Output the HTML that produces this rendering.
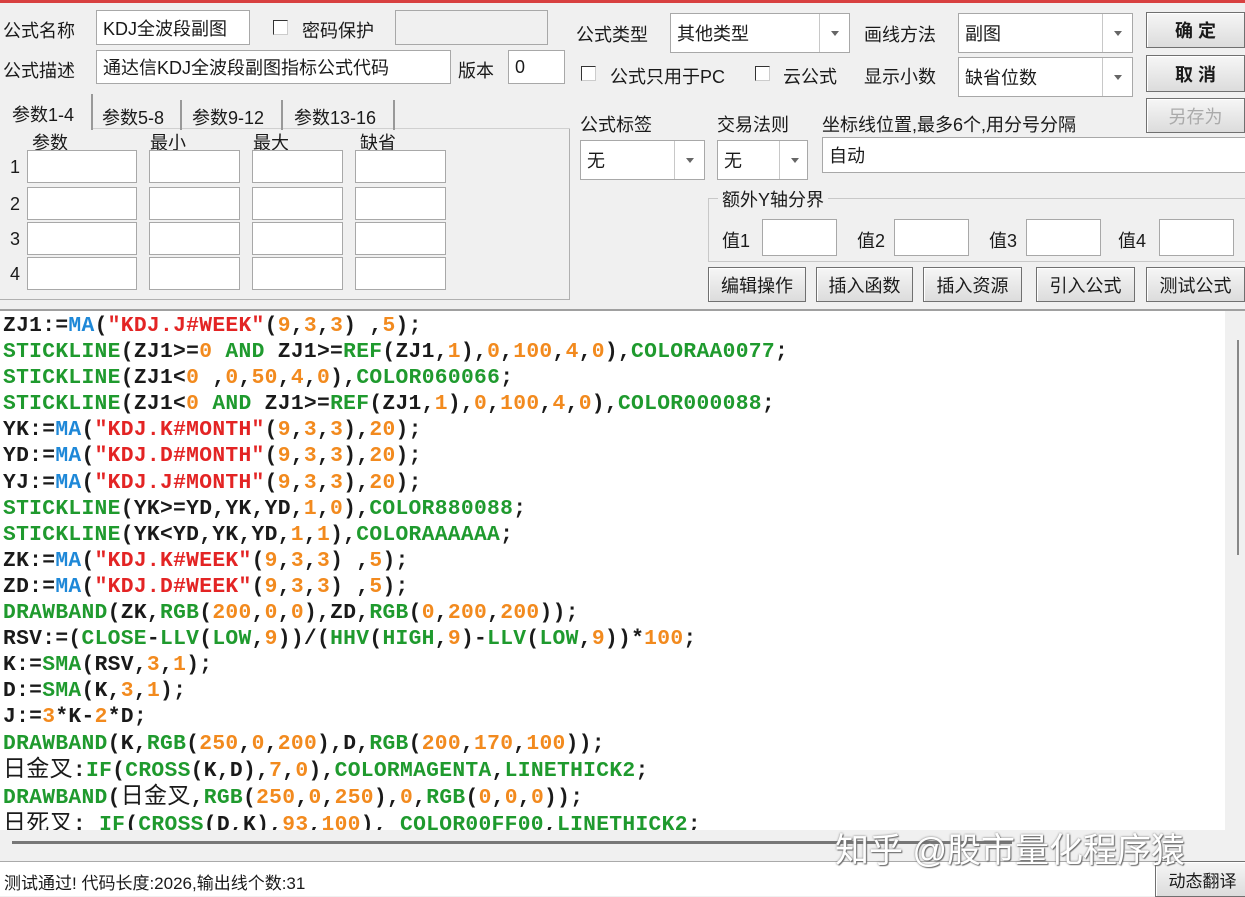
<!DOCTYPE html>
<html><head><meta charset="utf-8"><style>
*{box-sizing:border-box;margin:0;padding:0}
body{width:1245px;height:896px;overflow:hidden;background:#f0f0f0;position:relative;font-family:"Liberation Sans","Noto Sans CJK SC",sans-serif;font-size:18px;color:#1a1a1a}
.a{position:absolute;white-space:nowrap}
.in{position:absolute;background:#fff;border:1px solid #a8a8a8;padding-left:6px;display:flex;align-items:center}
.cb{position:absolute;width:15px;height:15px;border:1px solid #333;border-right-color:#ccc;border-bottom-color:#ccc;background:#fff}
.arr{position:absolute;right:0;top:0;bottom:0;width:30px;border-left:1px solid #c8c8c8}
.arr:after{content:"";position:absolute;left:11px;top:50%;margin-top:-2px;border:4px solid transparent;border-top:5px solid #666}
.btn{position:absolute;border:1px solid #707070;background:linear-gradient(#f6f6f6,#dcdcdc);display:flex;align-items:center;justify-content:center;box-shadow:inset 1px 1px 0 #fff}
#code{position:absolute;left:0;top:311px;width:1225px;height:519px;background:#fff;overflow:hidden;font-family:"Liberation Mono","Noto Sans CJK SC",monospace;font-weight:bold;font-size:21.3px;letter-spacing:0.3px;line-height:26.1px;padding:2px 0 0 3px;color:#1a1a1a}
#code div{white-space:pre}
.g{color:#1f9a2e}.b{color:#1e88d8}.r{color:#e32424}.o{color:#f28a1e}
</style></head><body>
<div class="a" style="left:0;top:0;width:1245px;height:3px;background:#d84040"></div>
<div class="a" style="left:3px;top:17px">公式名称</div>
<div class="in" style="left:96px;top:10px;width:154px;height:35px">KDJ全波段副图</div>
<div class="cb" style="left:273px;top:20px"></div>
<div class="a" style="left:302px;top:17px">密码保护</div>
<div class="in" style="left:395px;top:10px;width:153px;height:35px;background:#f0f0f0"></div>
<div class="a" style="left:3px;top:57px">公式描述</div>
<div class="in" style="left:96px;top:50px;width:355px;height:34px">通达信KDJ全波段副图指标公式代码</div>
<div class="a" style="left:458px;top:57px">版本</div>
<div class="in" style="left:508px;top:50px;width:57px;height:34px">0</div>
<div class="a" style="left:0;top:128px;width:570px;height:172px;border:1px solid #b0b0b0;border-top:none;border-left:none"></div>
<div class="a" style="left:0;top:128px;width:570px;border-top:1px solid #d0d0d0"></div>
<div class="a" style="left:0;top:94px;width:93px;height:36px;background:#f0f0f0;border-right:2px solid #999"></div>
<div class="a" style="left:12px;top:101px">参数1-4</div>
<div class="a" style="left:102px;top:104px">参数5-8</div>
<div class="a" style="left:192px;top:104px">参数9-12</div>
<div class="a" style="left:294px;top:104px">参数13-16</div>
<div class="a" style="left:180px;top:100px;width:2px;height:30px;background:#999"></div>
<div class="a" style="left:281px;top:100px;width:2px;height:30px;background:#999"></div>
<div class="a" style="left:393px;top:100px;width:2px;height:30px;background:#999"></div>
<div class="a" style="left:32px;top:129px">参数</div>
<div class="a" style="left:150px;top:129px">最小</div>
<div class="a" style="left:253px;top:129px">最大</div>
<div class="a" style="left:360px;top:129px">缺省</div>
<div class="a" style="left:10px;top:157px">1</div><div class="a" style="left:10px;top:194px">2</div><div class="a" style="left:10px;top:229px">3</div><div class="a" style="left:10px;top:264px">4</div>
<div class="in" style="left:27px;top:150px;width:110px;height:33px"></div><div class="in" style="left:149px;top:150px;width:91px;height:33px"></div><div class="in" style="left:252px;top:150px;width:91px;height:33px"></div><div class="in" style="left:355px;top:150px;width:91px;height:33px"></div>
<div class="in" style="left:27px;top:187px;width:110px;height:33px"></div><div class="in" style="left:149px;top:187px;width:91px;height:33px"></div><div class="in" style="left:252px;top:187px;width:91px;height:33px"></div><div class="in" style="left:355px;top:187px;width:91px;height:33px"></div>
<div class="in" style="left:27px;top:222px;width:110px;height:33px"></div><div class="in" style="left:149px;top:222px;width:91px;height:33px"></div><div class="in" style="left:252px;top:222px;width:91px;height:33px"></div><div class="in" style="left:355px;top:222px;width:91px;height:33px"></div>
<div class="in" style="left:27px;top:257px;width:110px;height:33px"></div><div class="in" style="left:149px;top:257px;width:91px;height:33px"></div><div class="in" style="left:252px;top:257px;width:91px;height:33px"></div><div class="in" style="left:355px;top:257px;width:91px;height:33px"></div>
<div class="a" style="left:576px;top:21px">公式类型</div>
<div class="in" style="left:670px;top:13px;width:180px;height:40px">其他类型<span class="arr"></span></div>
<div class="a" style="left:864px;top:21px">画线方法</div>
<div class="in" style="left:958px;top:13px;width:175px;height:40px">副图<span class="arr"></span></div>
<div class="btn" style="left:1146px;top:12px;width:99px;height:36px;font-weight:bold">确 定</div>
<div class="btn" style="left:1146px;top:55px;width:99px;height:37px;font-weight:bold">取 消</div>
<div class="btn" style="left:1146px;top:98px;width:99px;height:35px;color:#aaa">另存为</div>
<div class="cb" style="left:581px;top:66px"></div>
<div class="a" style="left:610px;top:63px">公式只用于PC</div>
<div class="cb" style="left:755px;top:66px"></div>
<div class="a" style="left:783px;top:63px">云公式</div>
<div class="a" style="left:864px;top:63px">显示小数</div>
<div class="in" style="left:958px;top:57px;width:175px;height:40px">缺省位数<span class="arr"></span></div>
<div class="a" style="left:580px;top:111px">公式标签</div>
<div class="a" style="left:717px;top:111px">交易法则</div>
<div class="a" style="left:822px;top:111px">坐标线位置,最多6个,用分号分隔</div>
<div class="in" style="left:580px;top:140px;width:125px;height:40px">无<span class="arr"></span></div>
<div class="in" style="left:717px;top:140px;width:91px;height:40px">无<span class="arr" style="width:28px"></span></div>
<div class="in" style="left:822px;top:137px;width:430px;height:36px">自动</div>
<div class="a" style="left:708px;top:198px;width:545px;height:64px;border:1px solid #c8c8c8"></div>
<div class="a" style="left:718px;top:186px;background:#f0f0f0;padding:0 4px">额外Y轴分界</div>
<div class="a" style="left:722px;top:227px">值1</div><div class="in" style="left:762px;top:219px;width:75px;height:37px"></div>
<div class="a" style="left:857px;top:227px">值2</div><div class="in" style="left:894px;top:219px;width:75px;height:37px"></div>
<div class="a" style="left:989px;top:227px">值3</div><div class="in" style="left:1026px;top:219px;width:75px;height:37px"></div>
<div class="a" style="left:1118px;top:227px">值4</div><div class="in" style="left:1159px;top:219px;width:75px;height:37px"></div>
<div class="btn" style="left:708px;top:267px;width:98px;height:35px">编辑操作</div>
<div class="btn" style="left:816px;top:267px;width:97px;height:35px">插入函数</div>
<div class="btn" style="left:923px;top:267px;width:99px;height:35px">插入资源</div>
<div class="btn" style="left:1036px;top:267px;width:99px;height:35px">引入公式</div>
<div class="btn" style="left:1146px;top:267px;width:99px;height:35px">测试公式</div>
<div class="a" style="left:0;top:309px;width:1245px;height:2px;background:#a0a0a0"></div>
<div id="code">
<div>ZJ1:=<span class="b">MA</span>(<span class="r">"KDJ.J#WEEK"</span>(<span class="o">9</span>,<span class="o">3</span>,<span class="o">3</span>) ,<span class="o">5</span>);</div>
<div><span class="g">STICKLINE</span>(ZJ1&gt;=<span class="o">0</span> <span class="g">AND</span> ZJ1&gt;=<span class="g">REF</span>(ZJ1,<span class="o">1</span>),<span class="o">0</span>,<span class="o">100</span>,<span class="o">4</span>,<span class="o">0</span>),<span class="g">COLORAA0077</span>;</div>
<div><span class="g">STICKLINE</span>(ZJ1&lt;<span class="o">0</span> ,<span class="o">0</span>,<span class="o">50</span>,<span class="o">4</span>,<span class="o">0</span>),<span class="g">COLOR060066</span>;</div>
<div><span class="g">STICKLINE</span>(ZJ1&lt;<span class="o">0</span> <span class="g">AND</span> ZJ1&gt;=<span class="g">REF</span>(ZJ1,<span class="o">1</span>),<span class="o">0</span>,<span class="o">100</span>,<span class="o">4</span>,<span class="o">0</span>),<span class="g">COLOR000088</span>;</div>
<div>YK:=<span class="b">MA</span>(<span class="r">"KDJ.K#MONTH"</span>(<span class="o">9</span>,<span class="o">3</span>,<span class="o">3</span>),<span class="o">20</span>);</div>
<div>YD:=<span class="b">MA</span>(<span class="r">"KDJ.D#MONTH"</span>(<span class="o">9</span>,<span class="o">3</span>,<span class="o">3</span>),<span class="o">20</span>);</div>
<div>YJ:=<span class="b">MA</span>(<span class="r">"KDJ.J#MONTH"</span>(<span class="o">9</span>,<span class="o">3</span>,<span class="o">3</span>),<span class="o">20</span>);</div>
<div><span class="g">STICKLINE</span>(YK&gt;=YD,YK,YD,<span class="o">1</span>,<span class="o">0</span>),<span class="g">COLOR880088</span>;</div>
<div><span class="g">STICKLINE</span>(YK&lt;YD,YK,YD,<span class="o">1</span>,<span class="o">1</span>),<span class="g">COLORAAAAAA</span>;</div>
<div>ZK:=<span class="b">MA</span>(<span class="r">"KDJ.K#WEEK"</span>(<span class="o">9</span>,<span class="o">3</span>,<span class="o">3</span>) ,<span class="o">5</span>);</div>
<div>ZD:=<span class="b">MA</span>(<span class="r">"KDJ.D#WEEK"</span>(<span class="o">9</span>,<span class="o">3</span>,<span class="o">3</span>) ,<span class="o">5</span>);</div>
<div><span class="g">DRAWBAND</span>(ZK,<span class="g">RGB</span>(<span class="o">200</span>,<span class="o">0</span>,<span class="o">0</span>),ZD,<span class="g">RGB</span>(<span class="o">0</span>,<span class="o">200</span>,<span class="o">200</span>));</div>
<div>RSV:=(<span class="g">CLOSE</span>-<span class="g">LLV</span>(<span class="g">LOW</span>,<span class="o">9</span>))/(<span class="g">HHV</span>(<span class="g">HIGH</span>,<span class="o">9</span>)-<span class="g">LLV</span>(<span class="g">LOW</span>,<span class="o">9</span>))*<span class="o">100</span>;</div>
<div>K:=<span class="g">SMA</span>(RSV,<span class="o">3</span>,<span class="o">1</span>);</div>
<div>D:=<span class="g">SMA</span>(K,<span class="o">3</span>,<span class="o">1</span>);</div>
<div>J:=<span class="o">3</span>*K-<span class="o">2</span>*D;</div>
<div><span class="g">DRAWBAND</span>(K,<span class="g">RGB</span>(<span class="o">250</span>,<span class="o">0</span>,<span class="o">200</span>),D,<span class="g">RGB</span>(<span class="o">200</span>,<span class="o">170</span>,<span class="o">100</span>));</div>
<div><span style="font-weight:normal;font-size:23px">日金叉</span>:<span class="g">IF</span>(<span class="g">CROSS</span>(K,D),<span class="o">7</span>,<span class="o">0</span>),<span class="g">COLORMAGENTA</span>,<span class="g">LINETHICK2</span>;</div>
<div><span class="g">DRAWBAND</span>(<span style="font-weight:normal;font-size:23px">日金叉</span>,<span class="g">RGB</span>(<span class="o">250</span>,<span class="o">0</span>,<span class="o">250</span>),<span class="o">0</span>,<span class="g">RGB</span>(<span class="o">0</span>,<span class="o">0</span>,<span class="o">0</span>));</div>
<div><span style="font-weight:normal;font-size:23px">日死叉</span>: <span class="g">IF</span>(<span class="g">CROSS</span>(D,K),<span class="o">93</span>,<span class="o">100</span>), <span class="g">COLOR00FF00</span>,<span class="g">LINETHICK2</span>;</div>
</div>
<div class="a" style="left:1237px;top:340px;width:2px;height:215px;background:#888"></div>
<div class="a" style="left:12px;top:841px;width:1000px;height:3px;background:#777"></div>
<div class="a" style="left:0;top:861px;width:1155px;height:35px;background:#fff;border-top:1px solid #aaa"></div>
<div class="a" style="left:4px;top:869px;font-size:17px">测试通过! 代码长度:2026,输出线个数:31</div>
<div class="btn" style="left:1155px;top:861px;width:95px;height:36px;font-size:17px">动态翻译</div>
<div class="a" style="left:835px;top:823px;font-size:34px;color:#fff;text-shadow:0 0 2px #777,1px 1px 1px #666">知乎 @股市量化程序猿</div>
</body></html>
